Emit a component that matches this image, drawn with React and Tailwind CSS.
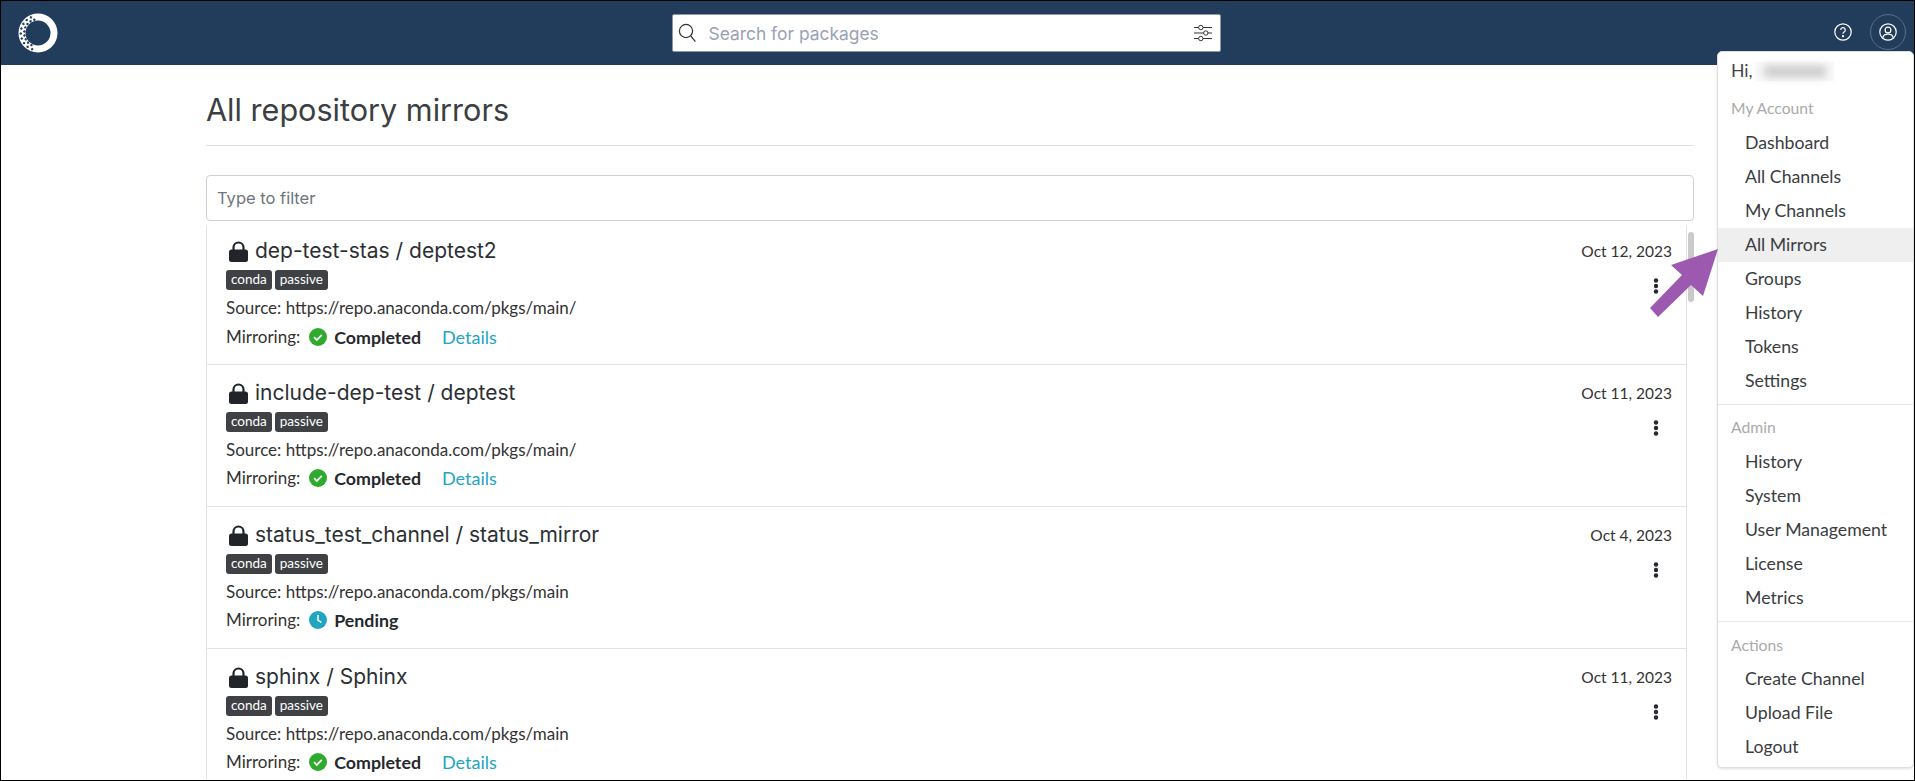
import React from 'react';

const mirrors = [
    { title: 'dep-test-stas / deptest2', date: 'Oct 12, 2023', source: 'https://repo.anaconda.com/pkgs/main/', status: 'Completed' },
    { title: 'include-dep-test / deptest', date: 'Oct 11, 2023', source: 'https://repo.anaconda.com/pkgs/main/', status: 'Completed' },
    { title: 'status_test_channel / status_mirror', date: 'Oct 4, 2023', source: 'https://repo.anaconda.com/pkgs/main', status: 'Pending' },
    { title: 'sphinx / Sphinx', date: 'Oct 11, 2023', source: 'https://repo.anaconda.com/pkgs/main', status: 'Completed' },
];

const menuGroups = [
    { label: 'My Account', items: ['Dashboard', 'All Channels', 'My Channels', 'All Mirrors', 'Groups', 'History', 'Tokens', 'Settings'] },
    { label: 'Admin', items: ['History', 'System', 'User Management', 'License', 'Metrics'] },
    { label: 'Actions', items: ['Create Channel', 'Upload File', 'Logout'] },
];

// holes in the left half of the logo ring, as [angle clockwise from top, radius]
const latticeHoles = [];
for (let a = 200; a <= 352; a += 17) {
    latticeHoles.push([a, 17.2]);
    latticeHoles.push([a + 8.5, 13.8]);
}

function Logo() {
    return (
        <svg width="42" height="42" viewBox="0 0 42 42" className="ml-[16px]">
            <path fillRule="evenodd" d="M21 1.500a19.500 19.500 0 1 0 0 39 19.500 19.500 0 1 0 0-39zM21 8.500a12.500 12.500 0 1 1 0 25 12.500 12.500 0 1 1 0-25z" fill="#fff" />
            {latticeHoles.map(([a, r], i) => (
                <polygon
                    key={i}
                    points={`21,${21 - r - 1.5} ${21 + 1.5},${21 - r} 21,${21 - r + 1.5} ${21 - 1.5},${21 - r}`}
                    transform={`rotate(${a} 21 21)`}
                    fill="#223d5b"
                />
            ))}
        </svg>
    );
}

function SearchBox() {
    return (
        <div className="flex items-center w-[549px] h-[38px] bg-white border border-[#8b97ab] rounded-[2px] pl-[5px] pr-[8px]">
            <svg width="19" height="20" viewBox="0 0 19 20" fill="none" stroke="#333" strokeWidth="1.2">
                <circle cx="8" cy="8" r="6.6" />
                <path d="m12.8 13 4.6 5.6" />
            </svg>
            <span className="ml-[12px] pt-[2px] flex-1 text-[17.400px] text-[#9aa1b6] font-[family-name:Inter,sans-serif]">Search for packages</span>
            <svg width="18" height="18" viewBox="0 0 18 18" fill="none" stroke="#333" strokeWidth="1">
                <path d="M0 3.5h4.5M9 3.5h9M0 9h9.5M14 9h4M0 14.500h4.500M9 14.500h9" />
                <circle cx="6.800" cy="3.500" r="2.200" />
                <circle cx="11.800" cy="9" r="2.200" />
                <circle cx="6.800" cy="14.500" r="2.200" />
            </svg>
        </div>
    );
}

function Lock() {
    return (
        <svg width="19" height="21" viewBox="0 0 19 21" className="shrink-0">
            <path d="M4.500 10V6.500a5 5 0 0 1 10 0V10" fill="none" stroke="#212529" strokeWidth="2.200" />
            <rect x="0" y="8.500" width="19" height="12.500" rx="2.500" fill="#212529" />
        </svg>
    );
}

function StatusIcon({ status }) {
    if (status === 'Pending') {
        return (
            <svg width="18" height="18" viewBox="0 0 18 18">
                <circle cx="9" cy="9" r="9" fill="#22a5c0" />
                <path d="M9 4v5.400l3.400 2" fill="none" stroke="#fff" strokeWidth="1.500" />
            </svg>
        );
    }
    return (
        <svg width="18" height="18" viewBox="0 0 18 18">
            <circle cx="9" cy="9" r="9" fill="#2eaa2c" />
            <path d="m5 9.200 2.800 2.800 5-5.200" fill="none" stroke="#fff" strokeWidth="1.800" />
        </svg>
    );
}

function Badge({ children }) {
    return <span className="flex items-center h-[20px] px-[5px] rounded-[3px] bg-[#3f4144] text-white text-[13.500px] leading-none">{children}</span>;
}

function MirrorRow({ mirror, first }) {
    return (
        <div className={`flex shrink-0 border-b border-[#e3e3e3] pl-[19px] pr-[14px] ${first ? 'pt-[11px] h-[139px]' : 'pt-[14px] h-[142px]'}`}>
            <div className="flex-1">
                <div className="flex items-center h-[28px] pl-[3px] gap-[7px] text-[21px] text-[#2b2f34] font-[family-name:Inter,sans-serif]">
                    <Lock />
                    <span>{mirror.title}</span>
                </div>
                <div className="flex gap-[3px] mt-[5px]">
                    <Badge>conda</Badge>
                    <Badge>passive</Badge>
                </div>
                <div className="h-[26px] mt-[5px] leading-[26px] text-[17px] text-[#333]">Source: {mirror.source}</div>
                <div className={`flex items-center h-[30px] text-[17px] text-[#333] ${first ? 'mt-[1px]' : 'mt-0'}`}>
                    <span>Mirroring:</span>
                    <span className="ml-[9px]"><StatusIcon status={mirror.status} /></span>
                    <span className="ml-[7px] font-bold text-[17.800px] text-[#25282c]">{mirror.status}</span>
                    {mirror.status === 'Completed' && <span className="ml-[21px] text-[18px] text-[#22a5c0]">Details</span>}
                </div>
            </div>
            <div className="flex flex-col items-end">
                <div className="h-[28px] leading-[28px] text-[15.500px] text-[#333]">{mirror.date}</div>
                <svg width="6" height="16" viewBox="0 0 6 16" className="mt-[13px] mr-[13px]" fill="#26292e">
                    <circle cx="3" cy="2.500" r="2.200" />
                    <circle cx="3" cy="8" r="2.200" />
                    <circle cx="3" cy="13.500" r="2.200" />
                </svg>
            </div>
        </div>
    );
}

function UserMenu() {
    return (
        <div className="absolute top-[50px] right-0 w-[197px] h-[717px] bg-white border border-[#dedede] rounded-[5px] shadow-sm text-[17.700px] z-10">
            <div className="flex items-center h-[19px] mt-[10px] ml-[13px] text-[#444]">
                <span>Hi,</span>
                <div className="ml-[3px] w-[78px] h-[19px] bg-[#f9f9f9] flex items-center justify-center">
                    <div className="w-[62px] h-[11px] bg-[#c9c9c9] blur-[4px]"></div>
                </div>
            </div>
            {menuGroups.map((group, idx) => (
                <div key={group.label} className={idx > 0 ? 'border-t border-[#e6e6e6] mt-[6px]' : ''}>
                    <div className={`pl-[13px] text-[15.700px] text-[#aaa] h-[24px] leading-[24px] ${idx === 0 ? 'mt-[15px]' : idx === 1 ? 'mt-[10px]' : 'mt-[11px]'}`}>{group.label}</div>
                    <div className={idx === 2 ? 'mt-[5px]' : 'mt-[6px]'}>
                        {group.items.map((item) => (
                            <div key={item} className={`pl-[27px] h-[34px] leading-[33px] text-[#3a3d41] ${item === 'All Mirrors' ? 'bg-[#efefef]' : ''}`}>{item}</div>
                        ))}
                    </div>
                </div>
            ))}
        </div>
    );
}

export default function App() {
    return (
        <div className="relative box-border w-[1915px] h-[781px] overflow-hidden border border-black bg-white font-[family-name:Lato,sans-serif]">
            {/* Top bar */}
            <div className="relative flex items-center justify-center h-[64px] pr-[23px] bg-[#223d5b]">
                <div className="absolute left-0 top-[11px]"><Logo /></div>
                <SearchBox />
                <div className="absolute right-[8px] top-[13px] flex items-center gap-[18px]">
                    <svg width="18" height="18" viewBox="0 0 18 18" fill="none" stroke="#fff" strokeWidth="1.200">
                        <circle cx="9" cy="9" r="8.200" />
                        <path d="M6.700 7a2.300 2.300 0 1 1 3.400 2c-.8.5-1.100.9-1.100 1.800" />
                        <circle cx="9" cy="13.200" r=".5" />
                    </svg>
                    <div className="flex items-center justify-center w-[36px] h-[36px] rounded-full border border-[#5a718a]">
                        <svg width="18" height="18" viewBox="0 0 18 18" fill="none" stroke="#fff" strokeWidth="1.200">
                            <circle cx="9" cy="9" r="8.200" />
                            <circle cx="9" cy="7" r="2.900" />
                            <path d="M3.600 15c.6-2.600 2.500-3.900 5.400-3.900s4.800 1.300 5.400 3.900" />
                        </svg>
                    </div>
                </div>
            </div>

            {/* Page body */}
            <div className="w-[1488px] ml-[205px]">
                <h1 className="h-[81px] pt-[25px] text-[30.600px] leading-[40px] text-[#3b3e42] font-[family-name:Inter,sans-serif] border-b border-[#dfe1e5]">All repository mirrors</h1>
                <div className="flex items-center h-[46px] mt-[29px] pl-[10px] pt-[1px] border border-[#ccd0d8] rounded-[4px] text-[16.500px] text-[#6f757c] font-[family-name:Inter,sans-serif]">Type to filter</div>
                <div className="flex h-[555px] mt-[5px]">
                    <div className="flex flex-col flex-1 overflow-hidden border-l border-r border-[#e3e3e3]">
                        {mirrors.map((mirror, i) => <MirrorRow key={i} mirror={mirror} first={i === 0} />)}
                    </div>
                    <div className="w-[7px]">
                        <div className="w-[6px] h-[70px] ml-[1px] mt-[6px] rounded-[3px] bg-[#cacaca]"></div>
                    </div>
                </div>
            </div>

            <UserMenu />

            {/* Annotation arrow */}
            <svg width="70" height="70" viewBox="0 0 70 70" className="absolute left-[1648px] top-[248px] z-20">
                <polygon points="69,0 22,16 33,26 1,59 9,68 42,36 54,47" fill="#9d59b0" />
            </svg>
        </div>
    );
}
